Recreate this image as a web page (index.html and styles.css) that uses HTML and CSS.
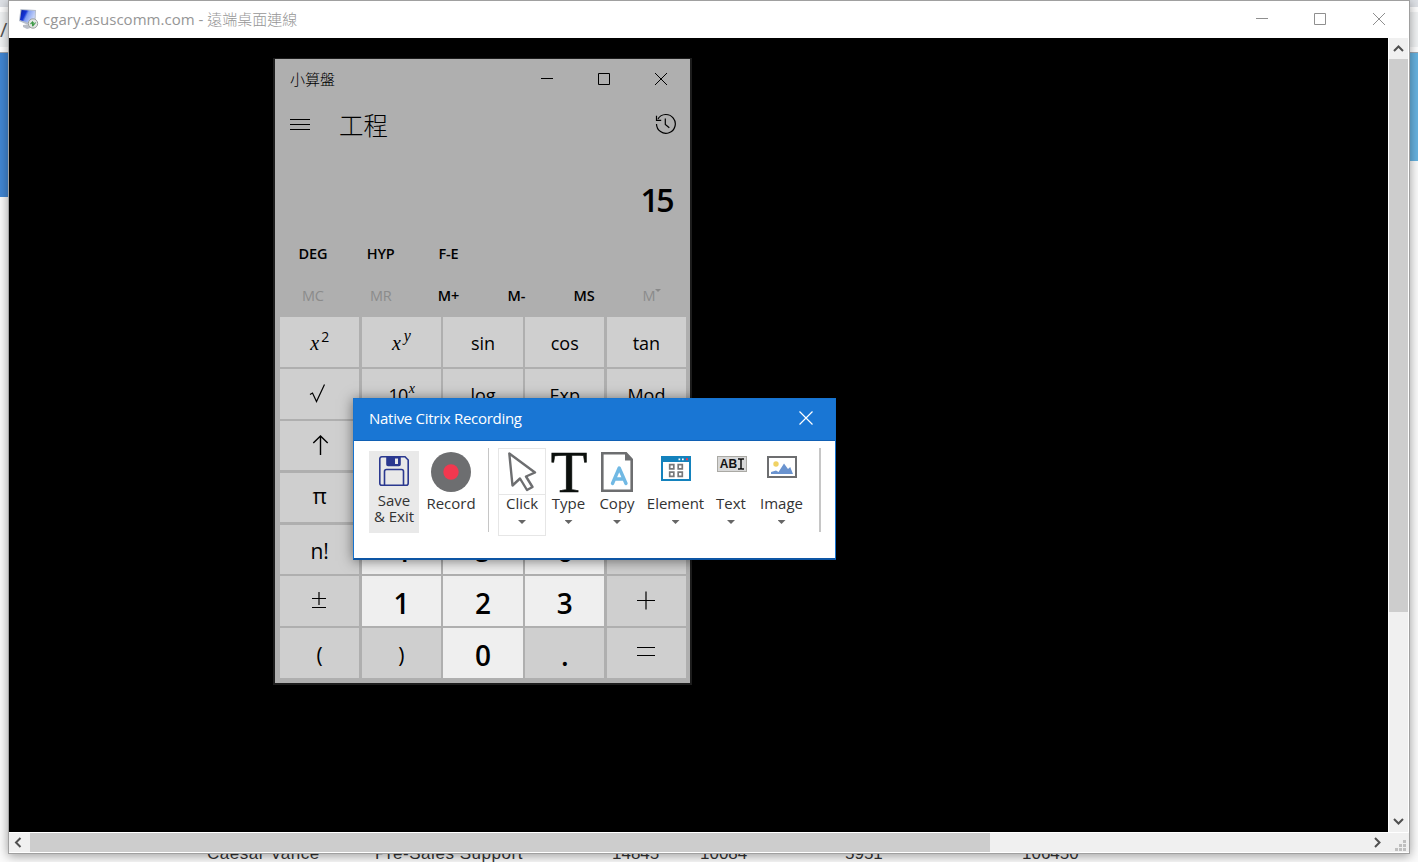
FILE: index.html
```
<!DOCTYPE html>
<html lang="zh-Hant">
<head>
<meta charset="utf-8">
<title>遠端桌面連線</title>
<link rel="stylesheet" href="styles.css">
</head>
<body>
<div class="desktop">
  <div class="page">
    <div class="page-tabs"></div>
    <div class="page-address"><span>/</span></div>
    <div class="page-hero"><div class="hero-left"></div><div class="hero-right"></div></div>
    <div class="page-row">
      <span class="wide">Caesar Vance</span><span class="wide">Pre-Sales Support</span><span>14845</span><span>10084</span><span>5951</span><span>106450</span>
    </div>
  </div>

  <div class="rdp">
    <div class="rdp-title">
      <svg class="rdp-icon" width="20" height="21" viewBox="0 0 20 21">
        <defs><linearGradient id="scr" x1="0" y1="0" x2="1" y2="0.4"><stop offset="0" stop-color="#0b1f9c"/><stop offset=".4" stop-color="#1433d6"/><stop offset=".55" stop-color="#7f9cf0"/><stop offset="1" stop-color="#c9d6fa"/></linearGradient></defs>
        <path d="M4 16l8-1 3 3-7 2-4-2z" fill="#b9bdc6"/>
        <path d="M1.500 0L17 1 16.500 13.500 8 15.500 0 12z" fill="#b4bccb"/>
        <path d="M2.500 1L16 2 15.500 11.500 8.500 13.500 1 11z" fill="url(#scr)"/>
        <circle cx="14" cy="14.500" r="4.700" fill="#e3e5e4" stroke="#9aa09c"/>
        <path d="M11.500 15l2-2v4M14.200 13v3.500l2.400-3" fill="none" stroke="#3f9b48" stroke-width="1.100"/>
      </svg>
      <span class="rdp-name">cgary.asuscomm.com - <span class="cjk">遠端桌面連線</span></span>
      <svg class="rdp-controls" width="131" height="14" viewBox="0 0 131 14" fill="none" stroke="#8f8f8f">
        <path d="M0 5.500h12M58.500.500h11v11h-11zM117 0l12 12M129 0l-12 12"/>
      </svg>
    </div>
    <div class="rdp-main">
      <div class="remote">
        <div class="calc">
          <div class="calc-title">
            <span class="calc-name">小算盤</span>
            <svg width="128" height="14" viewBox="0 0 128 14" fill="none" stroke="#000">
              <path d="M0 6.500h12M57.500 1.500h11v11h-11zM114 1l12 12M126 1l-12 12"/>
            </svg>
          </div>
          <div class="calc-head">
            <svg width="20" height="13" viewBox="0 0 20 13" stroke="#000"><path d="M0 1.500h20M0 6.500h20M0 11.500h20"/></svg>
            <span class="calc-mode">工程</span>
            <svg class="history" width="22" height="22" viewBox="0 0 22 22" fill="none" stroke="#000" stroke-width="1.200"><path d="M1.500 11A9.400 9.400 0 1 0 3 5.800M1.500 2.800V7.300H6.200M10.300 5.500V11.500L14.300 14.800"/></svg>
          </div>
          <div class="display">15</div>
          <div class="modes"><span>DEG</span><span>HYP</span><span>F-E</span></div>
          <div class="memory"><span class="off">MC</span><span class="off">MR</span><span>M+</span><span>M-</span><span>MS</span><span class="off">M<svg class="mcaret" width="6" height="4" viewBox="0 0 6 4"><path d="M0 0h6L3 3z" fill="#888"/></svg></span></div>
          <div class="keys">
            <div class="key"><span class="math"><i>x</i><span class="sup2">2</span></span></div>
            <div class="key"><span class="math"><i>x</i><i class="supy">y</i></span></div>
            <div class="key">sin</div><div class="key">cos</div><div class="key">tan</div>
            <div class="key"><svg class="root" width="18" height="20" viewBox="0 0 18 20" fill="none" stroke="#000" stroke-width="1.200"><path d="M1 10.500l2.500-1.500L7.500 17.500 15.500.500"/></svg></div>
            <div class="key"><span class="ten">10<i class="supx">x</i></span></div>
            <div class="key">log</div><div class="key">Exp</div><div class="key">Mod</div>
            <div class="key"><svg class="arrow" width="17" height="20" viewBox="0 0 17 20" fill="none" stroke="#000" stroke-width="1.400"><path d="M8.500 1V20M1.300 8L8.500 1l7.200 7"/></svg></div>
            <div class="key"></div><div class="key"></div><div class="key"></div><div class="key"></div>
            <div class="key pi">π</div>
            <div class="key num"></div><div class="key num"></div><div class="key num"></div><div class="key"></div>
            <div class="key big">n!</div>
            <div class="key num">4</div><div class="key num">5</div><div class="key num">6</div><div class="key"></div>
            <div class="key"><svg class="op" width="16" height="20" viewBox="0 0 16 20" fill="none" stroke="#000"><path d="M1 8.500h14M8 2v13M1 17.500h14" stroke-width="1.200"/></svg></div>
            <div class="key num">1</div><div class="key num">2</div><div class="key num">3</div>
            <div class="key"><svg class="op plus" width="18" height="20" viewBox="0 0 18 20" fill="none" stroke="#000" stroke-width="1.200"><path d="M0 9.500h18M9 .500v18"/></svg></div>
            <div class="key big paren">(</div><div class="key big paren">)</div><div class="key num zero">0</div><div class="key num dot">.</div>
            <div class="key"><svg class="op" width="18" height="20" viewBox="0 0 18 20" fill="none" stroke="#000" stroke-width="1.200"><path d="M0 5.500h18M0 13.500h18"/></svg></div>
          </div>
        </div>

        <div class="dialog">
          <div class="dialog-title">
            <span>Native Citrix Recording</span>
            <svg width="14" height="14" viewBox="0 0 14 14" stroke="#fff" stroke-width="1.200"><path d="M.500.500l13 13M13.500.500l-13 13"/></svg>
          </div>
          <div class="tools">
            <div class="tool save">
              <svg width="30" height="30" viewBox="0 0 30 30" fill="none" stroke="#2b3990" stroke-width="1.600"><path d="M4 .8H26L29.200 4V27.200a2 2 0 0 1-2 2H2.800a2 2 0 0 1-2-2V2.800a2 2 0 0 1 2-2zM5.500 29V15.500a2 2 0 0 1 2-2h15a2 2 0 0 1 2 2V29"/><path d="M8 1h13v7.500a1 1 0 0 1-1 1H9a1 1 0 0 1-1-1z" fill="#2b3990"/><path d="M16 2.500h3v5.500h-3z" fill="#e9e9e9" stroke="none"/></svg>
              <span>Save</span><span>&amp; Exit</span>
            </div>
            <div class="tool record">
              <svg width="40" height="40" viewBox="0 0 40 40"><circle cx="20" cy="20" r="20" fill="#6d6e70"/><circle cx="20" cy="20" r="7.700" fill="#f2384f"/></svg>
              <span>Record</span>
            </div>
            <div class="rule"></div>
            <div class="tool click">
              <svg width="30" height="40" viewBox="0 0 30 40" fill="none" stroke="#6d6e70" stroke-width="2.400" stroke-linejoin="round"><path d="M2.300 1.500L5.500 33.500 13 26.500 20 38 25.500 35 19 24.500 28 20.500z"/></svg>
              <span>Click</span><i class="caret"></i>
            </div>
            <div class="tool type"><span class="tee">T</span><span>Type</span><i class="caret"></i></div>
            <div class="tool copy">
              <svg width="32" height="40" viewBox="0 0 32 40"><path d="M1.300 1.300H25L30.700 7.500V38.700H1.300z" fill="#fff" stroke="#6d6e70" stroke-width="2.600"/><path d="M24 1v7.500h7z" fill="#6d6e70"/><path d="M11.500 31.500L18.200 16 25 31.500M13.500 27h9.500" fill="none" stroke="#71b9e4" stroke-width="3.400" stroke-linecap="round" stroke-linejoin="round"/></svg>
              <span>Copy</span><i class="caret"></i>
            </div>
            <div class="tool element">
              <svg width="30" height="25" viewBox="0 0 30 25"><path d="M1 1h28v23H1z" fill="#fff" stroke="#1482bd" stroke-width="2"/><path d="M0 0h30v6H0z" fill="#1482bd"/><path d="M17.500 2.500h1.700v1.700h-1.700zM21 2.500h1.700v1.700H21z" fill="#fff"/><path d="M25 2.300h2v2h-2z" fill="#f2384f"/><path d="M8.700 8.700h4.100v4.100H8.700zM17.200 8.700h4.100v4.100h-4.100zM8.700 16.200h4.100v4.100H8.700zM17.200 16.200h4.100v4.100h-4.100z" fill="none" stroke="#77787a" stroke-width="1.700"/></svg>
              <span>Element</span><i class="caret"></i>
            </div>
            <div class="tool text">
              <div class="abi"><b>AB</b><svg width="6" height="12" viewBox="0 0 6 12" fill="none" stroke="#111" stroke-width="1.500"><path d="M0 1h2.200L3 2l.8-1H6M3 2v8M0 11h2.200L3 10l.8 1H6"/></svg></div>
              <span>Text</span><i class="caret"></i>
            </div>
            <div class="tool image">
              <svg width="30" height="22" viewBox="0 0 30 22"><path d="M1 1h28v20H1z" fill="#fff" stroke="#6d6e70" stroke-width="2"/><circle cx="9" cy="8" r="2.700" fill="#f0d264"/><path d="M4 18v-2l5-1.500 2.500 1.500L17 7.500l4 5.500 2.200-2L26 18z" fill="#6a93cf"/></svg>
              <span>Image</span><i class="caret"></i>
            </div>
            <div class="rule thick"></div>
          </div>
        </div>
      </div>
      <div class="vbar">
        <svg width="19" height="21" viewBox="0 0 19 21" fill="none" stroke="#505050" stroke-width="2"><path d="M5 13l4.500-4.500L14 13"/></svg>
        <div class="vthumb"></div>
        <svg class="push" width="19" height="21" viewBox="0 0 19 21" fill="none" stroke="#505050" stroke-width="2"><path d="M5 8l4.500 4.500L14 8"/></svg>
      </div>
    </div>
    <div class="hbar">
      <svg width="21" height="19" viewBox="0 0 21 19" fill="none" stroke="#505050" stroke-width="2"><path d="M11.500 5L7 9.500l4.500 4.500"/></svg>
      <div class="hthumb"></div>
      <svg class="push" width="21" height="19" viewBox="0 0 21 19" fill="none" stroke="#505050" stroke-width="2"><path d="M8 5l4.500 4.500L8 14"/></svg>
      <svg class="grip" width="11" height="11" viewBox="0 0 11 11" fill="#bfbfbf"><path d="M8 0h3v3H8zM4 4h3v3H4zM8 4h3v3H8zM0 8h3v3H0zM4 8h3v3H4zM8 8h3v3H8z"/></svg>
    </div>
  </div>
</div>
</body>
</html>
```
FILE: styles.css
```
* { box-sizing: border-box; }
body { margin: 0; font-family: "Open Sans", "Noto Sans CJK TC", sans-serif; }
svg { display: block; flex: none; }
.cjk { font-family: "Noto Sans CJK TC", sans-serif; font-weight: 300; letter-spacing: 0; }

.desktop { position: relative; width: 1418px; height: 862px; overflow: hidden; background: #fbfbfb; }

/* page behind the window */
.page { display: flex; flex-direction: column; height: 862px; }
.page-tabs { height: 7px; background: #dee1e6; }
.page-address { height: 45px; border-top: 5px solid #fff; border-bottom: 5px solid #fff; background: #f1f3f4; color: #555; font: 20px/35px "Open Sans", sans-serif; }
.page-hero { display: flex; flex: none; justify-content: space-between; height: 793px; }
.hero-left { width: 700px; height: 145px; background: #4186d3; border-top: 1px solid #9fa5ad; }
.hero-right { width: 700px; height: 109px; background: #66b2e0; border-top: 1px solid #9fa5ad; }
.page-row { display: grid; flex: none; grid-template-columns: 168px 237px 88px 145px 177px 1fr; padding-left: 207px; height: 17px; font: 17px/18px "Liberation Sans", sans-serif; color: #333; white-space: nowrap; }
.wide { letter-spacing: .53px; }

/* remote desktop window */
.rdp { position: absolute; left: 8px; top: 0; width: 1402px; height: 854px; border: 1px solid #a0a0a0; background: #fff; box-shadow: 0 2px 10px rgba(0,0,0,.38); }
.rdp-title { display: flex; align-items: center; height: 37px; padding-left: 10px; }
.rdp-name { margin: -3px 0 0 4px; font-size: 15px; color: #969696; white-space: nowrap; letter-spacing: .03px; }
.rdp-controls { margin-left: auto; margin-right: 22px; }
.rdp-main { display: flex; height: 794px; }
.remote { width: 1379px; height: 794px; background: #000; }
.vbar { display: flex; flex-direction: column; width: 19px; margin-left: 1px; background: #f0f0f0; }
.vthumb { height: 553px; background: #cdcdcd; }
.vbar .push { margin-top: auto; }
.hbar { display: flex; align-items: center; height: 19px; margin-top: 1px; background: #f0f0f0; }
.hthumb { width: 960px; height: 19px; background: #cdcdcd; }
.hbar .push { margin-left: auto; }
.grip { margin: 5px 3px 0 7px; }

/* calculator window */
.calc { position: absolute; left: 264px; top: 57px; width: 419px; height: 627px; border: 2px solid #1d1d1d; border-top-width: 1px; background: #afafaf; color: #000; }
.calc-title { display: flex; align-items: center; justify-content: space-between; height: 40px; padding: 0 21px 0 15px; }
.calc-name { margin-top: -1px; font: 300 15px/20px "Noto Sans CJK TC", sans-serif; }
.calc-head { display: flex; align-items: center; height: 52px; padding: 0 13px 2px 15px; }
.calc-mode { margin: 2px 0 0 29px; font: 300 24.500px/30px "Noto Sans CJK TC", sans-serif; }
.history { margin-left: auto; }
.display { height: 98px; padding-right: 18px; text-align: right; font-size: 32px; font-weight: 600; line-height: 98px; letter-spacing: -2.600px; }
.modes, .memory { display: grid; grid-template-columns: repeat(6, 67.800px); padding-left: 4px; font-size: 14.500px; font-weight: 600; text-align: center; letter-spacing: -.2px; }
.modes { height: 10px; line-height: 9px; }
.memory { height: 58px; line-height: 73px; }
.off { color: #8b8b8b; font-weight: 400; }
.mcaret { display: inline-block; vertical-align: 8px; }
.keys { display: grid; grid-template-columns: repeat(5, 79.400px); grid-auto-rows: 49.700px; column-gap: 2.300px; row-gap: 2.200px; padding-left: 5px; }
.key { display: flex; align-items: center; justify-content: center; background: #cfcfcf; font-size: 18px; line-height: 24px; padding-top: 2px; }
.num { padding-top: 4px; background: #efefef; font-size: 28px; font-weight: 600; }
.zero, .dot { padding-top: 3px; }
.dot { background: #cfcfcf; }
.big { padding-top: 4px; font-size: 21px; }
.pi { padding-bottom: 6px; font-size: 22px; }
.math { display: flex; font-family: "Liberation Serif", serif; font-size: 20px; }
.math i { font-size: 20px; }
.math .sup2 { margin: -6px 0 0 2px; font: 14px/24px "Open Sans", sans-serif; }
.math .supy { margin: -7px 0 0 3px; font-size: 16px; }
.ten { display: flex; letter-spacing: -.6px; }
.ten .supx { margin: -6px 0 0 1px; font: italic 14px/24px "Liberation Serif", serif; }
.op { margin: -4px 1px 0 0; }
.plus { margin-top: -2px; }
.root { margin: -1px 3px 0 0; }
.arrow { margin: -3px 0 0 2px; }

/* recording toolbar */
.dialog { position: absolute; left: 344px; top: 397px; width: 483px; height: 162px; border: 1px solid #1673cf; border-bottom: 2px solid #0d55a4; background: #fff; box-shadow: 0 1px 12px rgba(0,0,0,.5); }
.dialog-title { display: flex; align-items: center; justify-content: space-between; height: 42px; padding: 0 22px 4px 15px; border-bottom: 1px solid #1060b4; background: #1976d4; color: #fff; font-size: 15px; letter-spacing: -.28px; }
.tools { display: flex; align-items: flex-start; padding: 7px 0 0 15px; color: #333; }
.tool { display: flex; flex-direction: column; align-items: center; font-size: 15px; line-height: 20px; white-space: nowrap; }
.tool > svg { margin-bottom: 1px; }
.save { width: 50px; height: 82px; margin-top: 3px; padding-top: 5px; background: #e9e9e9; line-height: 16px; }
.save > svg { margin-bottom: 6px; }
.record { width: 50px; margin-left: 7px; padding-top: 4px; }
.rule { width: 1px; height: 84px; margin-left: 12px; background: #c6c6c6; }
.thick { width: 2px; margin-left: 10px; }
.click { width: 48px; height: 88px; margin-left: 9px; padding-top: 3px; border: 1px solid #e6e6e6; background: linear-gradient(#e6e6e6, #e6e6e6) 0 45px / 48px 1px no-repeat; }
.type { width: 45px; padding-top: 4px; }
.copy { width: 52px; padding-top: 4px; }
.element { width: 65px; padding-top: 8px; }
.text { width: 46px; padding-top: 8px; }
.image { width: 55px; padding-top: 8px; }
.tool.element > svg { margin-bottom: 12px; }
.tool.image > svg { margin-bottom: 15px; }
.tee { height: 41px; margin-left: 1px; font: 60px/40px "Liberation Serif", serif; color: #0b0f0c; -webkit-text-stroke: .6px #0b0f0c; }
.abi { display: flex; align-items: center; justify-content: center; gap: 1px; width: 30px; height: 16px; margin: 0 0 21px 2px; border: 1px solid #aaa9a4; background: #d8d8d8; color: #111; font: 12px/14px "Liberation Sans", sans-serif; }
.caret { width: 8px; height: 4px; margin-top: 7px; background: #666; clip-path: polygon(0 0, 100% 0, 50% 100%); }
```
